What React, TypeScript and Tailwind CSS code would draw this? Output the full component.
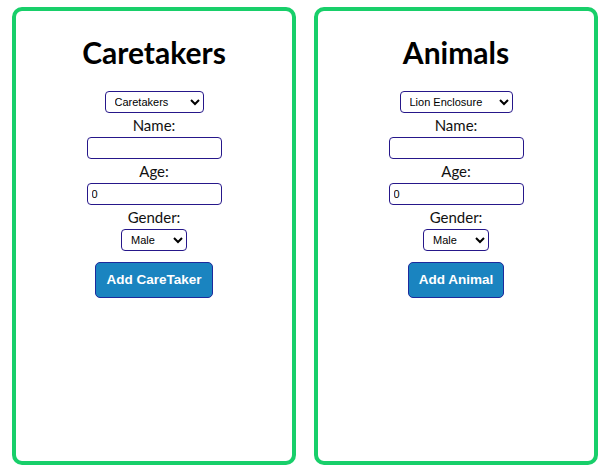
function Panel({ title, options, selectW, button }: { title: string; options: string[]; selectW: string; button: string }) {
  return (
    <div className="w-[284px] h-[458px] border-4 border-[#18cf6a] rounded-[10px] bg-white flex flex-col items-center">
      <h1 className="mt-[21px] text-[30px] leading-[40px] font-bold text-black font-['Lato',sans-serif]">{title}</h1>
      <select className={`${selectW} mt-[19px] h-[22px] border border-[#26178a] rounded-[4px] bg-white text-[11px] font-['Liberation_Sans',Arial,sans-serif] text-black px-[5px] pr-[4px]`}>
        {options.map((o) => (
          <option key={o}>{o}</option>
        ))}
      </select>
      <label className="text-[15px] leading-[24px] text-[#111] font-['Lato',sans-serif]">Name:</label>
      <input className="w-[135px] h-[22px] border border-[#26178a] rounded-[4px] bg-white px-[4px] text-[11px] font-['Liberation_Sans',Arial,sans-serif]" />
      <label className="text-[15px] leading-[24px] text-[#111] font-['Lato',sans-serif]">Age:</label>
      <input
        defaultValue="0"
        className="w-[135px] h-[22px] border border-[#26178a] rounded-[4px] bg-white px-[4px] text-[11px] font-['Liberation_Sans',Arial,sans-serif]"
      />
      <label className="text-[15px] leading-[24px] text-[#111] font-['Lato',sans-serif]">Gender:</label>
      <select className="w-[66px] h-[22px] border border-[#26178a] rounded-[4px] bg-white text-[11px] font-['Liberation_Sans',Arial,sans-serif] text-black px-[5px]">
        <option>Male</option>
        <option>Female</option>
      </select>
      <button className="mt-[11px] h-[36px] px-[10px] bg-[#1a84c0] border border-[#1d2a9c] rounded-[5px] text-white text-[13.5px] font-bold font-['Liberation_Sans',Arial,sans-serif]">
        {button}
      </button>
    </div>
  )
}

export default function App() {
  return (
    <div className="w-[604px] h-[474px] bg-white flex gap-[18px] pl-[12px] pt-[7px]">
      <Panel title="Caretakers" options={["Caretakers"]} selectW="w-[99px]" button="Add CareTaker" />
      <Panel title="Animals" options={["Lion Enclosure"]} selectW="w-[113px]" button="Add Animal" />
    </div>
  )
}
